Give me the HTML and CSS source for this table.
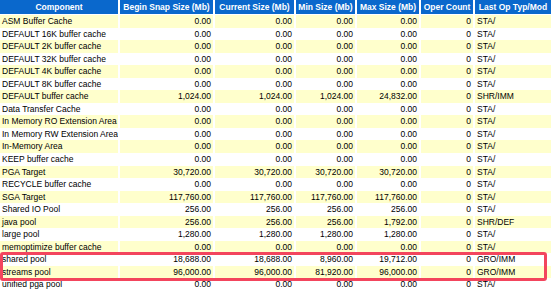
FILE: index.html
```html
<!DOCTYPE html>
<html lang="en">
<head>
    <meta charset="UTF-8">
    <meta name="viewport" content="width=device-width, initial-scale=1.0">
    <title>Memory Dynamic Components</title>
    <link rel="stylesheet" href="styles.css">
</head>
<body>
    <div class="report-wrapper">
        <table class="awr-table">
            <colgroup>
                <col class="col-comp">
                <col class="col-begin">
                <col class="col-cur">
                <col class="col-min">
                <col class="col-max">
                <col class="col-oper">
                <col class="col-last">
            </colgroup>
            <thead>
                <tr>
                    <th>Component</th>
                    <th>Begin Snap Size (Mb)</th>
                    <th>Current Size (Mb)</th>
                    <th>Min Size (Mb)</th>
                    <th>Max Size (Mb)</th>
                    <th>Oper Count</th>
                    <th>Last Op Typ/Mod</th>
                </tr>
            </thead>
            <tbody>
                <tr><td>ASM Buffer Cache</td><td class="num">0.00</td><td class="num">0.00</td><td class="num">0.00</td><td class="num">0.00</td><td class="num">0</td><td>STA/</td></tr>
                <tr><td>DEFAULT 16K buffer cache</td><td class="num">0.00</td><td class="num">0.00</td><td class="num">0.00</td><td class="num">0.00</td><td class="num">0</td><td>STA/</td></tr>
                <tr><td>DEFAULT 2K buffer cache</td><td class="num">0.00</td><td class="num">0.00</td><td class="num">0.00</td><td class="num">0.00</td><td class="num">0</td><td>STA/</td></tr>
                <tr><td>DEFAULT 32K buffer cache</td><td class="num">0.00</td><td class="num">0.00</td><td class="num">0.00</td><td class="num">0.00</td><td class="num">0</td><td>STA/</td></tr>
                <tr><td>DEFAULT 4K buffer cache</td><td class="num">0.00</td><td class="num">0.00</td><td class="num">0.00</td><td class="num">0.00</td><td class="num">0</td><td>STA/</td></tr>
                <tr><td>DEFAULT 8K buffer cache</td><td class="num">0.00</td><td class="num">0.00</td><td class="num">0.00</td><td class="num">0.00</td><td class="num">0</td><td>STA/</td></tr>
                <tr><td>DEFAULT buffer cache</td><td class="num">1,024.00</td><td class="num">1,024.00</td><td class="num">1,024.00</td><td class="num">24,832.00</td><td class="num">0</td><td>SHR/IMM</td></tr>
                <tr><td>Data Transfer Cache</td><td class="num">0.00</td><td class="num">0.00</td><td class="num">0.00</td><td class="num">0.00</td><td class="num">0</td><td>STA/</td></tr>
                <tr><td>In Memory RO Extension Area</td><td class="num">0.00</td><td class="num">0.00</td><td class="num">0.00</td><td class="num">0.00</td><td class="num">0</td><td>STA/</td></tr>
                <tr><td>In Memory RW Extension Area</td><td class="num">0.00</td><td class="num">0.00</td><td class="num">0.00</td><td class="num">0.00</td><td class="num">0</td><td>STA/</td></tr>
                <tr><td>In-Memory Area</td><td class="num">0.00</td><td class="num">0.00</td><td class="num">0.00</td><td class="num">0.00</td><td class="num">0</td><td>STA/</td></tr>
                <tr><td>KEEP buffer cache</td><td class="num">0.00</td><td class="num">0.00</td><td class="num">0.00</td><td class="num">0.00</td><td class="num">0</td><td>STA/</td></tr>
                <tr><td>PGA Target</td><td class="num">30,720.00</td><td class="num">30,720.00</td><td class="num">30,720.00</td><td class="num">30,720.00</td><td class="num">0</td><td>STA/</td></tr>
                <tr><td>RECYCLE buffer cache</td><td class="num">0.00</td><td class="num">0.00</td><td class="num">0.00</td><td class="num">0.00</td><td class="num">0</td><td>STA/</td></tr>
                <tr><td>SGA Target</td><td class="num">117,760.00</td><td class="num">117,760.00</td><td class="num">117,760.00</td><td class="num">117,760.00</td><td class="num">0</td><td>STA/</td></tr>
                <tr><td>Shared IO Pool</td><td class="num">256.00</td><td class="num">256.00</td><td class="num">256.00</td><td class="num">256.00</td><td class="num">0</td><td>STA/</td></tr>
                <tr><td>java pool</td><td class="num">256.00</td><td class="num">256.00</td><td class="num">256.00</td><td class="num">1,792.00</td><td class="num">0</td><td>SHR/DEF</td></tr>
                <tr><td>large pool</td><td class="num">1,280.00</td><td class="num">1,280.00</td><td class="num">1,280.00</td><td class="num">1,280.00</td><td class="num">0</td><td>STA/</td></tr>
                <tr><td>memoptimize buffer cache</td><td class="num">0.00</td><td class="num">0.00</td><td class="num">0.00</td><td class="num">0.00</td><td class="num">0</td><td>STA/</td></tr>
                <tr><td>shared pool</td><td class="num">18,688.00</td><td class="num">18,688.00</td><td class="num">8,960.00</td><td class="num">19,712.00</td><td class="num">0</td><td>GRO/IMM</td></tr>
                <tr><td>streams pool</td><td class="num">96,000.00</td><td class="num">96,000.00</td><td class="num">81,920.00</td><td class="num">96,000.00</td><td class="num">0</td><td>GRO/IMM</td></tr>
                <tr><td>unified pga pool</td><td class="num">0.00</td><td class="num">0.00</td><td class="num">0.00</td><td class="num">0.00</td><td class="num">0</td><td>STA/</td></tr>
            </tbody>
        </table>
        <div class="highlight-box"></div>
    </div>
</body>
</html>
```

FILE: styles.css
```css
body {
    margin: 0;
    background: #fff;
    font-family: "Liberation Sans", Arial, sans-serif;
}
.report-wrapper {
    position: relative;
    width: 554px;
}
.awr-table {
    border-collapse: collapse;
    table-layout: fixed;
    width: 551px;
    font-size: 8.5px;
    color: #000;
}
.col-comp { width: 119px; }
.col-begin { width: 95px; }
.col-cur { width: 81px; }
.col-min { width: 61px; }
.col-max { width: 64px; }
.col-oper { width: 54px; }
.col-last { width: 77px; }
.awr-table th,
.awr-table td {
    padding: 0 2px;
    white-space: nowrap;
    overflow: hidden;
    border-left: 2px solid #fff;
}
.awr-table th:first-child,
.awr-table td:first-child {
    border-left: none;
}
.awr-table td:first-child {
    padding-right: 0;
}
.awr-table th {
    background: #0a68cc;
    color: #fff;
    font-weight: bold;
    text-align: center;
    height: 13px;
    line-height: 13px;
    padding-top: 1px;
    padding-bottom: 0;
    box-sizing: border-box;
    border-bottom: 1px solid #fff;
}
.awr-table td {
    height: 12.55px;
    line-height: 12.55px;
    text-align: left;
    background: #fff;
}
.awr-table tbody tr:nth-child(odd) td {
    background: #ffffcc;
}
.awr-table td.num {
    text-align: right;
}
.highlight-box {
    position: absolute;
    left: 0;
    top: 251.5px;
    width: 547px;
    height: 29px;
    box-sizing: border-box;
    border: 3px solid #f3455d;
    border-radius: 3px;
    pointer-events: none;
}
```
